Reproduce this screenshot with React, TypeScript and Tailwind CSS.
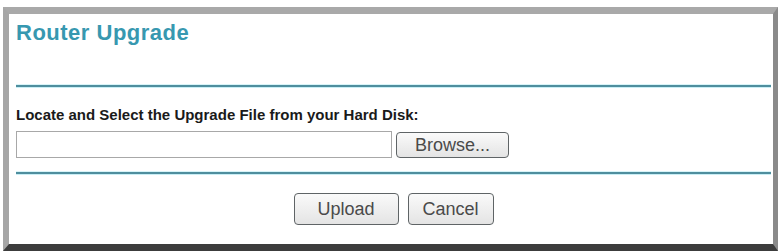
export default function App() {
  const line = (
    <div className="h-[2px] bg-[#4f8e9e] shadow-[0_1px_0_#c9eef5,0_-1px_0_#d8f4f8]" />
  );
  const btn =
    "h-[26px] rounded-[4px] border-[1.5px] border-[#5f6466] bg-gradient-to-b from-[#fafafa] to-[#e4e4e4] text-[18px] leading-none text-[#4a4a4a] flex items-center justify-center";
  return (
    <div
      className="w-[779px] h-[251px] bg-white pt-[7px] pl-[3px] pr-[1px] overflow-hidden"
      style={{ fontFamily: '"Liberation Sans", Arial, sans-serif' }}
    >
      <div className="h-[244px] border-t-[7px] border-l-[6px] border-r-[5px] border-b-[7px] border-t-[#a9a9a9] border-l-[#a6a6a6] border-r-[#8a8a8a] border-b-[#3c3c3c] bg-white pl-[7px] pr-[2px]">
        <div className="pt-[6px] h-[71px]">
          <div className="text-[22px] font-bold tracking-[0.5px] text-[#3798b0] leading-[25px]">
            Router Upgrade
          </div>
        </div>
        {line}
        <div className="pt-[19px] text-[15px] font-bold text-[#1a1a1a] leading-[18px]">
          Locate and Select the Upgrade File from your Hard Disk:
        </div>
        <div className="flex items-center gap-[4px] mt-[7px]">
          <div className="w-[376px] h-[27px] border border-[#a8a8a8] bg-white" />
          <div className={btn + " w-[113px]"}>Browse...</div>
        </div>
        <div className="mt-[14px]">{line}</div>
        <div className="flex justify-center gap-[9px] mt-[19px]">
          <div className={btn + " w-[105px] h-[32px]"}>Upload</div>
          <div className={btn + " w-[86px] h-[32px]"}>Cancel</div>
        </div>
      </div>
    </div>
  );
}
